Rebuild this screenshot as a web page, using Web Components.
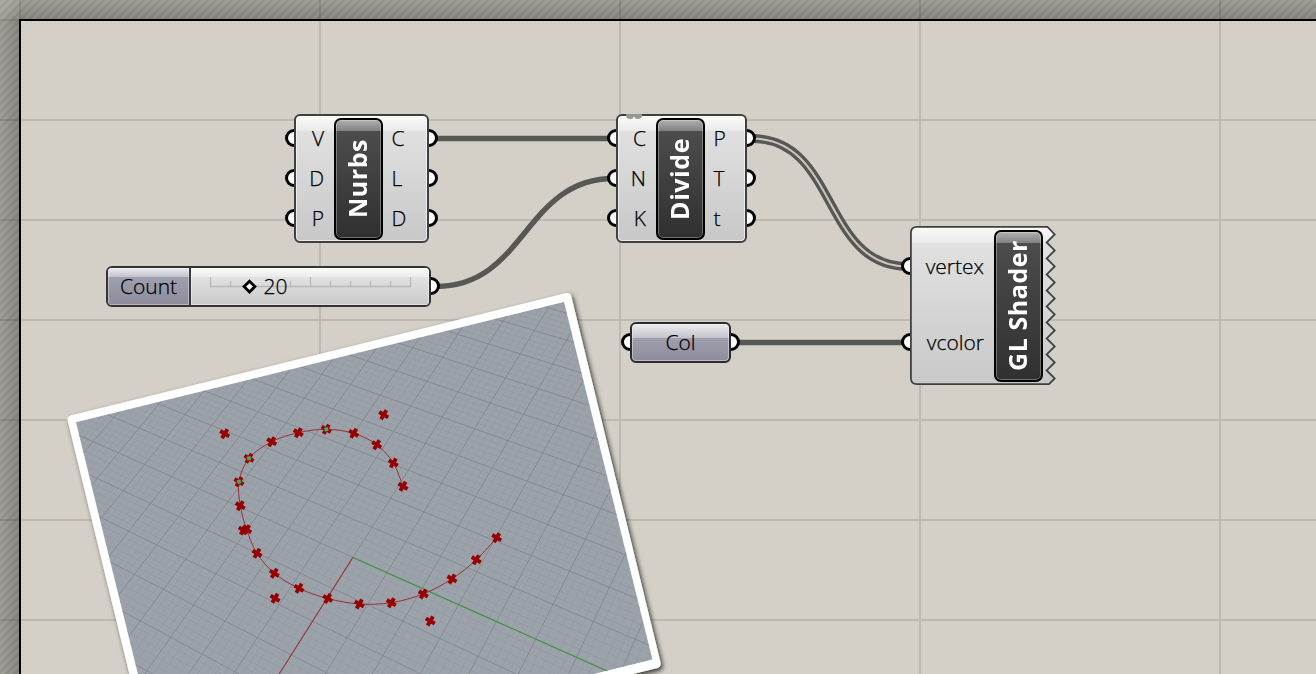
<!DOCTYPE html>
<html lang="en">
<head>
<meta charset="utf-8">
<title>Definition canvas</title>
<style>
html,body{margin:0;height:100%;overflow:hidden}
body{font-family:"Open Sans","Noto Sans",sans-serif}
</style>
</head>
<body>
<gh-canvas>
  <gh-wires></gh-wires>
  <gh-component name="Nurbs" inputs="V,D,P" outputs="C,L,D" style="left:294px;top:114px;width:135px;height:129px"></gh-component>
  <gh-component name="Divide" inputs="C,N,K" outputs="P,T,t" dots style="left:616px;top:114px;width:131px;height:129px"></gh-component>
  <gh-component name="GL Shader" inputs="vertex,vcolor" jagged style="left:910px;top:226px;width:145px;height:159px;--row:76px;--pad:3px;--in:84px"></gh-component>
  <gh-slider label="Count" value="20" style="left:106px;top:266px;width:325px;height:41px"></gh-slider>
  <gh-param style="left:630px;top:322px;width:101px;height:41px">Col</gh-param>
  <gh-viewport></gh-viewport>
</gh-canvas>
<script>
const build = (el, html) => { el.attachShadow({mode:'open'}).innerHTML = html; };
const port = `.port{position:absolute;width:12px;height:12px;border:3.9px solid #000;border-radius:50%;background:#fff;z-index:-1}`;

customElements.define('gh-canvas', class extends HTMLElement {
  connectedCallback() {
    build(this, `<style>
    :host{display:block;position:relative;width:1316px;height:674px;overflow:hidden;background:#d4d0c8}
    svg{position:absolute;left:0;top:0}
    </style>
    <svg width="1316" height="674">
      <defs>
        <pattern id="h" width="8" height="8" patternUnits="userSpaceOnUse"><path d="M-2 2L2-2M-2 10L10-2M6 10L10 6" stroke="#000" stroke-opacity=".08" stroke-width="2.8"/></pattern>
        <linearGradient id="t" x2="0" y2="1"><stop stop-color="#a3a098"/><stop offset="1" stop-color="#8a8881"/></linearGradient>
        <linearGradient id="l"><stop stop-color="#a3a098"/><stop offset="1" stop-color="#8a8881"/></linearGradient>
        <radialGradient id="c" gradientUnits="userSpaceOnUse" cx="0" cy="0" r="26"><stop stop-color="#b4b0a7"/><stop offset="1" stop-color="#b4b0a7" stop-opacity="0"/></radialGradient>
      </defs>
      <path d="M0 0H1316V20H20Z" fill="url(#t)"/><path d="M0 0L20 20V674H0Z" fill="url(#l)"/>
      <path d="M0 0H1316V20H20V674H0Z" fill="url(#c)"/>
      <path d="M0 0H1316V20H20V674H0Z" fill="url(#h)"/>
      <path d="M20 0V674M320 0V674M620 0V674M920 0V674M1220 0V674M0 20H1316M0 120H1316M0 220H1316M0 320H1316M0 420H1316M0 520H1316M0 620H1316" stroke="#000" stroke-opacity=".105" stroke-width="2"/>
      <path d="M20 674V20H1316" fill="none" stroke="#000" stroke-width="2"/>
    </svg><slot></slot>`);
  }
});

customElements.define('gh-wires', class extends HTMLElement {
  connectedCallback() {
    build(this, `<style>:host{position:absolute;left:0;top:0}svg{display:block}</style>
    <svg width="1316" height="674" fill="none" stroke="#575754" stroke-width="5.4">
      <path d="M432 138.5H614M738 342.5H908"/>
      <path d="M436 286.5C526 286.5 524 178.5 614 178.5"/>
      <path d="M752 138.5C838 138.5 822 266.5 908 266.5" stroke-width="8.8"/>
      <path d="M752 138.5C838 138.5 822 266.5 908 266.5" stroke="#cbc7c0" stroke-width="2"/>
    </svg>`);
  }
});

customElements.define('gh-component', class extends HTMLElement {
  connectedCallback() {
    const list = n => (this.getAttribute(n) || '').split(',').filter(Boolean);
    const row = (t, side) => `<div class="row ${side}"><i class="port"></i><span>${t}</span></div>`;
    const jag = this.hasAttribute('jagged');
    let d = 'M7 .9H137.5';
    for (let k = 0; k < 10; k++) d += `L144.7 ${8.4 + k * 16}` + (k < 9 ? `L136.7 ${16.4 + k * 16}` : 'L139 158.1');
    d += 'H7Q.9 158.1 .9 152V7Q.9 .9 7 .9Z';
    build(this, `<style>
    :host{position:absolute;z-index:1;box-sizing:border-box;display:grid;grid-template-columns:var(--in,40px) 49px 1fr;font-size:21px;font-weight:300;color:#000;-webkit-text-stroke:.25px #000}
    .body{position:absolute;inset:0;z-index:-1;box-sizing:border-box;border:2px solid #3f413f;border-radius:6px;
      background:linear-gradient(#fbfbfb,#e9e9e9 15px,#e0e0e0 15px,#c8c8c8);box-shadow:inset 0 0 0 1px rgba(255,255,255,.6)}
    svg.body{border:0;background:none;box-shadow:none;overflow:visible}
    .col{display:flex;flex-direction:column;padding-top:var(--pad,4.5px)}
    .row{position:relative;height:var(--row,40px);display:flex;align-items:center;line-height:1}
    .in{justify-content:flex-end;padding-right:10px}
    .out{padding-left:8.5px}
    .row span{position:relative;top:-.5px}
    ${port}
    .port{z-index:-2;top:calc(50% - 10px)}
    .in .port{left:-9.4px}.out .port{right:-9.4px}
    .cap{margin:4px 0 3.5px;box-sizing:border-box;border:2px solid #000;border-radius:7px;display:flex;align-items:center;justify-content:center;
      background:linear-gradient(#adadad,#9a9a9a 5px,#818181 11px,#4c4c4c 11px,#303030);box-shadow:inset 0 0 0 1px rgba(255,255,255,.3)}
    .cap b{writing-mode:vertical-rl;transform:rotate(180deg);color:#fff;font-size:25px;font-weight:700;letter-spacing:.55px;line-height:30px;white-space:nowrap;-webkit-text-stroke:0;margin-right:3px}
    .dots{position:absolute;left:10px;top:0;width:18px;height:5px;overflow:hidden}
    .dots i{float:left;width:8px;height:8px;margin-top:-3.5px;border-radius:50%;background:#969696}
    </style>
    ${jag ? `<svg class="body" width="146" height="159"><defs><linearGradient id="g" x2="0" y2="159" gradientUnits="userSpaceOnUse"><stop stop-color="#fbfbfb"/><stop offset=".11" stop-color="#e9e9e9"/><stop offset=".11" stop-color="#e1e1e1"/><stop offset="1" stop-color="#c8c8c8"/></linearGradient></defs><path d="${d}" fill="url(#g)" stroke="#3f413f" stroke-width="1.8"/></svg>` : '<div class="body"></div>'}
    <div class="col">${list('inputs').map(t => row(t, 'in')).join('')}</div>
    <div class="cap"><b>${this.getAttribute('name')}</b></div>
    <div class="col">${list('outputs').map(t => row(t, 'out')).join('')}</div>
    ${this.hasAttribute('dots') ? '<div class="dots"><i></i><i></i></div>' : ''}`);
  }
});

customElements.define('gh-slider', class extends HTMLElement {
  connectedCallback() {
    let t = '';
    for (let k = 0; k <= 10; k++) if (k !== 2 && k !== 3) t += `M${18.5 + k * 20} 20.5V${k % 5 ? 14 : 10}`;
    build(this, `<style>
    :host{position:absolute;z-index:1;font-size:21px;font-weight:300;line-height:1;-webkit-text-stroke:.25px #000}
    .body{box-sizing:border-box;height:100%;display:flex;border:2px solid #333;border-radius:6px;overflow:hidden}
    .label{flex:0 0 83px;box-sizing:border-box;border-right:2px solid #3a3a3e;display:flex;align-items:center;justify-content:center;
      background:linear-gradient(#ececf2,#c2c1cc 9px,#a09fad 9px,#8e8c9c);box-shadow:inset 0 0 0 1px rgba(255,255,255,.35)}
    .track{position:relative;flex:1;background:linear-gradient(#fbfbfb,#ebebeb 9px,#e2e2e2 9px,#c9c9c9);box-shadow:inset 0 0 0 1px rgba(255,255,255,.4)}
    svg{position:absolute;left:.5px;top:-1.5px}
    .track span{position:absolute;left:72.5px;top:7.5px}
    ${port}.port{right:-9.4px;top:10.5px}
    </style><i class="port"></i>
    <div class="body"><div class="label">${this.getAttribute('label')}</div>
    <div class="track"><svg width="239" height="40"><path d="${t}M18 19.5H219" fill="none" stroke="#b9b9b9" stroke-width="1.4"/><path d="M57.5 14.2L62.9 19.6L57.5 25L52.1 19.6Z" fill="#fff" stroke="#000" stroke-width="2.8"/></svg><span>${this.getAttribute('value')}</span></div></div>`);
  }
});

customElements.define('gh-param', class extends HTMLElement {
  connectedCallback() {
    build(this, `<style>
    :host{position:absolute;z-index:1;font-size:21px;font-weight:300;line-height:1;-webkit-text-stroke:.25px #000}
    .body{box-sizing:border-box;height:100%;display:flex;align-items:center;justify-content:center;border:2px solid #2c2c2e;border-radius:6px;
      background:linear-gradient(#ececf0,#c4c3cd 14px,#a09fad 14px,#8e8c9c);box-shadow:inset 0 0 0 1px rgba(255,255,255,.4)}
    ${port}.port{top:10.5px}.a{left:-9.4px}.b{right:-9.4px}
    </style><i class="port a"></i><i class="port b"></i><div class="body"><slot></slot></div>`);
  }
});

customElements.define('gh-viewport', class extends HTMLElement {
  // Camera: least-squares homography from construction-plane nodes [i, j] to screen [x, y].
  camera(nodes) {
    const A = Array.from({length:8}, () => Array(9).fill(0));
    for (const [i,j,X,Y,w=1] of nodes) for (const r of [[i,j,1,0,0,0,-i*X,-j*X,X],[0,0,0,i,j,1,-i*Y,-j*Y,Y]])
      for (let a=0;a<8;a++) for (let b=0;b<9;b++) A[a][b]+=w*r[a]*r[b];
    for (let c=0;c<8;c++) {
      let p=c; for (let r=c;r<8;r++) if (Math.abs(A[r][c])>Math.abs(A[p][c])) p=r;
      [A[c],A[p]]=[A[p],A[c]];
      for (let r=0;r<8;r++) if (r!==c) { const f=A[r][c]/A[c][c]; for (let k=c;k<9;k++) A[r][k]-=f*A[c][k]; }
    }
    const H = A.map((r,k)=>r[8]/r[k]);
    return (i,j) => { const w = H[6]*i+H[7]*j+1; return [(H[0]*i+H[1]*j+H[2])/w,(H[3]*i+H[4]*j+H[5])/w]; };
  }
  connectedCallback() {
    const at = this.camera([[0,0,352.9,557.4,12],[-1,1,405.7,541.3],[-2,1,425,511.7],[-2,3,493.7,540],[-2,4,531,555.3],[-3,1,442.3,484],[-3,3,511,510],[-4,0,425,443.3],[-4,3,527.3,480.7],[-5,0,441.7,416.7],[-5,3,543.3,452.7],[-6,3,558.1,425.2],[-6,2,522.3,414.7],[-7,2,538.3,388.7],[-7,3,572.7,400.7],[-1,7,636,640],[-1,4,514,587.7],[0,6,575.3,656.7],[1,2,403.3,621.7],[2,2,383.3,655.7],[1,3,440,638.3]]);
    const seg = (a,b,c,d) => { const p=at(a,b),q=at(c,d); return `M${p[0].toFixed(1)} ${p[1].toFixed(1)}L${q[0].toFixed(1)} ${q[1].toFixed(1)}`; };
    let minor='', major='';
    const i0=-14,i1=8,j0=-13,j1=9;
    for (let k=i0*5;k<=i1*5;k++) { const s=seg(k/5,j0,k/5,j1); k%5?minor+=s:major+=s; }
    for (let k=j0*5;k<=j1*5;k++) { const s=seg(i0,k/5,i1,k/5); k%5?minor+=s:major+=s; }
    const curve=[[403,486.3],[393.3,463],[376.7,444.7],[353.7,433.3],[326.3,429.3,1],[298.3,432.7],[271.7,441.7],[249,458.3,1],[239,481.7,1],[240.3,505.7],[246.7,529.7],[257,553.3],[274.3,573.3],[299,588.3],[327.7,598.5],[359.3,604],[391.3,602.7],[423.3,593.9],[452,578.9],[476.3,559.7],[496.7,537.7]];
    const free=[[224.7,433.7],[383.7,414.7],[243.3,530],[275,598.3],[430.3,621]];
    let c='M'+curve[0].slice(0,2);
    for (let k=0;k<curve.length-1;k++){const a=curve[k-1]||curve[k],b=curve[k],e=curve[k+1],f=curve[k+2]||e;
      c+=`C${b[0]+(e[0]-a[0])/6} ${b[1]+(e[1]-a[1])/6} ${e[0]-(f[0]-b[0])/6} ${e[1]-(f[1]-b[1])/6} ${e[0]} ${e[1]}`;}
    const marks=[...curve,...free].map(([x,y,g])=>`<g transform="translate(${x} ${y}) rotate(-14)"><path d="M-3.7-3.7L3.7 3.7M-3.7 3.7L3.7-3.7" stroke="#960000" stroke-width="3.9"/>${g?'<path d="M-2-2H2V2H-2Z" fill="#4fa35c"/>':''}</g>`).join('');
    build(this, `<style>:host{position:absolute;left:0;top:0;z-index:2}svg{display:block}</style>
    <svg width="1316" height="674">
      <defs><clipPath id="v"><path d="M76 422.3L564 302L652.4 659.5L164 780Z"/></clipPath>
      <filter id="s" x="-10%" y="-10%" width="120%" height="120%"><feDropShadow dx="2" dy="2.5" stdDeviation="2.7" flood-color="#000" flood-opacity=".75"/></filter></defs>
      <path d="M71.7 419.5L567.2 297.2L656.5 663.8L161 786Z" fill="#fff" stroke="#fff" stroke-width="8.4" stroke-linejoin="round" filter="url(#s)"/>
      <g clip-path="url(#v)" fill="none"><path d="M60 280H680V680H60Z" fill="#9ba2aa"/>
      <path d="${minor}" stroke="#8b8f9a" stroke-opacity=".3" stroke-width=".8"/>
      <path d="${major}" stroke="#80808b" stroke-opacity=".7" stroke-width="1"/>
      <path d="M352.9 557.4L278.6 675" stroke="#963c3c" stroke-width="1.1"/><path d="M352.9 557.4L615 674.6" stroke="#3c963c" stroke-width="1.1"/>
      <path d="${c}" stroke="#963232" stroke-width="1"/>
      ${marks}</g>
    </svg>`);
  }
});
</script>
</body>
</html>
